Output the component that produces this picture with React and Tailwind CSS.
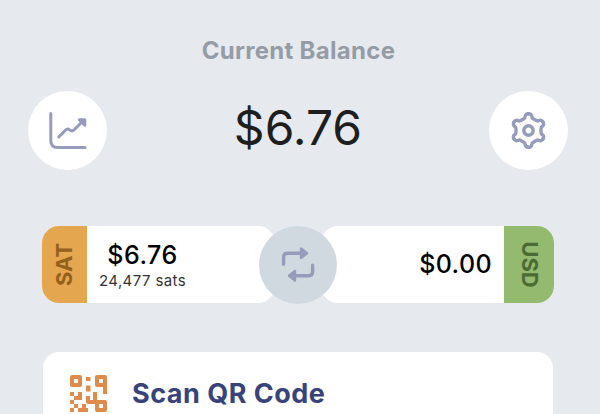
const gearAngles = [0, 60, 120, 180, 240, 300];

function ChartIcon() {
  return (
    <svg width="40" height="40" viewBox="0 0 40 40" fill="none" stroke="#959cbc" strokeWidth="3" strokeLinecap="round" strokeLinejoin="round">
      <path d="M2.8 2.5v27q0 7 7 7H37" />
      <path d="M10.8 26l6.6-6.8q2.2-2.2 4.4-.2t4.4-.2l7-7" />
      <path d="M31.3 8.8h5.5v5.5z" fill="#959cbc" />
    </svg>
  );
}

function GearIcon() {
  return (
    <svg width="40" height="40" viewBox="-19.5 -19.5 40 40" fill="none" stroke="#959cbc" strokeWidth="3.4" strokeLinecap="round">
      {gearAngles.map((a) => (
        <path key={a} transform={`rotate(${a})`} d="M14.5 -8.4A2.9 2.9 0 0 1 13.9 -4.2Q12.5 -3.4 12.5 -1.8V1.8Q12.5 3.4 13.9 4.2A2.9 2.9 0 0 1 14.5 8.4" />
      ))}
      <circle r="4.7" />
    </svg>
  );
}

function SwapIcon() {
  return (
    <svg width="36" height="38" viewBox="0 0 36 38" fill="none" stroke="#959cbc" strokeWidth="3.4" strokeLinecap="round" strokeLinejoin="round">
      <path d="M3.6 18.3v-7q0-4 4-4H21" />
      <path d="M32.6 19.2v6.5q0 4-4 4H15" />
      <path d="M21 2.5v9.6l6-4.8z" fill="#959cbc" strokeWidth="2.4" />
      <path d="M15 24.9v9.6l-6-4.8z" fill="#959cbc" strokeWidth="2.4" />
    </svg>
  );
}

function QrIcon() {
  return (
    <svg width="38" height="38" viewBox="0 0 38 38" fill="#df8b4b">
      <g fill="none" stroke="#df8b4b" strokeWidth="4" strokeLinejoin="round">
        <path d="M2 2h8v8H2z" />
        <path d="M35 19V2h-8v8h8" />
        <path d="M27 27h8v8h-8z" />
        <path d="M18 21v6h9M25 17v10" />
      </g>
      <path d="M16 2h4.500v4H16zM16 10.500h4.500v6H16zM0 17h4v4H0zM8 17h4v8H4v-4h4zM0 25h4v4H0zM4 29h4v4H4zM12 29h4v4h2v4H8v-4h4zM0 33h4v4H0z" />
    </svg>
  );
}

export default function App() {
  return (
    <div className="h-[414px] w-[600px] overflow-hidden bg-[#e6eaef] font-[Inter,sans-serif]">
      <h1 className="pt-[36px] pr-[3px] text-center text-[24px] leading-[30px] font-bold tracking-[0.3px] text-[#959ca6]">Current Balance</h1>
      <div className="mt-[25px] flex h-[79px] items-center justify-between pr-8 pl-7">
        <button className="flex size-[79px] items-center justify-center rounded-full bg-white"><ChartIcon /></button>
        <span className="pb-[6px] text-[48px] leading-[58px] text-[#1e1e1e]">$6.76</span>
        <button className="flex size-[79px] items-center justify-center rounded-full bg-white"><GearIcon /></button>
      </div>
      <div className="relative mt-[56px] ml-[42px] flex h-[77px] w-[512px] justify-between">
        <div className="flex w-[233px] overflow-hidden rounded-[17px] bg-white">
          <div className="flex w-[45px] items-center justify-center bg-[#e5a650] pl-px">
            <span className="-rotate-90 text-[22px] font-bold text-[#94601d]">SAT</span>
          </div>
          <div className="flex w-[111px] flex-col items-center pt-[13px]">
            <span className="text-[25px] leading-[32px] font-medium tracking-[0.5px] text-black">$6.76</span>
            <span className="pt-px text-[15px] leading-[18px] tracking-[0.4px] whitespace-nowrap text-[#333]">24,477 sats</span>
          </div>
        </div>
        <div className="flex w-[233px] justify-end overflow-hidden rounded-[17px] bg-white">
          <span className="flex items-center pt-px pr-3 text-[25px] font-medium tracking-[0.4px] text-black">$0.00</span>
          <div className="flex w-[50px] items-center justify-center bg-[#93ba6f]">
            <span className="rotate-90 text-[22px] font-bold text-[#4b6b35]">USD</span>
          </div>
        </div>
        <button className="absolute top-0 left-[217px] flex size-[78px] items-center justify-center rounded-full bg-[#d1d9e0]"><SwapIcon /></button>
      </div>
      <div className="mt-[49px] ml-[43px] flex h-[90px] w-[510px] items-start rounded-2xl bg-white pt-[23px] pl-[27px]">
        <QrIcon />
        <span className="ml-6 text-[27px] leading-[38px] font-bold tracking-[0.5px] text-[#38437a]">Scan QR Code</span>
      </div>
    </div>
  );
}
